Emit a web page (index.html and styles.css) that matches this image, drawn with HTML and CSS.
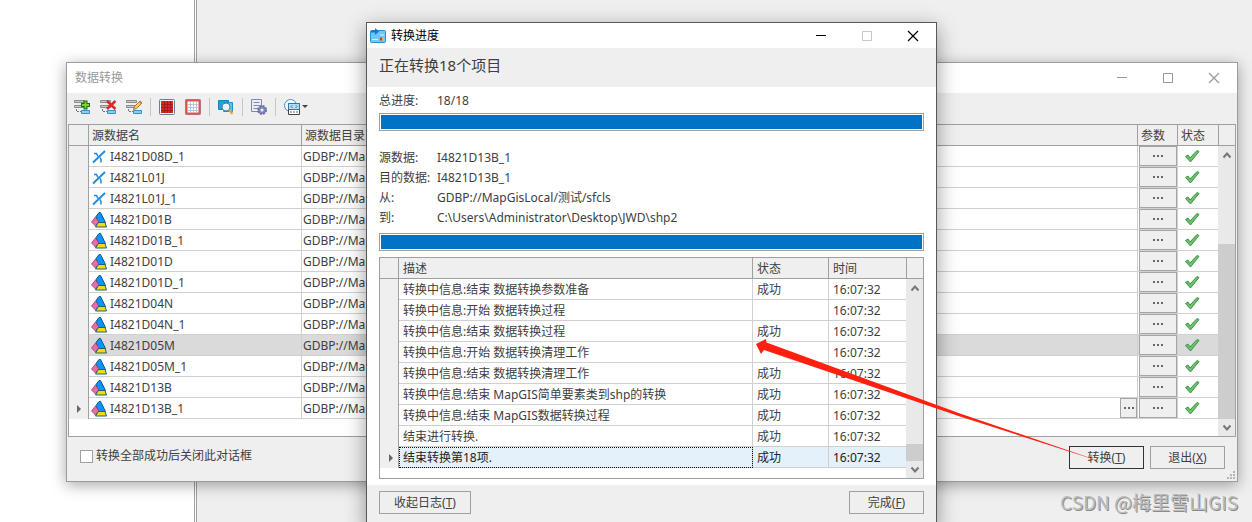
FILE: index.html
```html
<!DOCTYPE html>
<html lang="zh-CN">
<head>
<meta charset="utf-8">
<title>数据转换</title>
<link rel="stylesheet" href="styles.css">
</head>
<body>
<svg class="defs" aria-hidden="true">
  <symbol id="line" viewBox="0 0 16 16"><path d="M14 2 2 13.500" fill="none" stroke="#1b8ae0" stroke-width="1.800"/><path d="M3 4.500h2.500L7 7.500M9 8.500l1 2v3" fill="none" stroke="#1b8ae0" stroke-width="1.500"/></symbol>
  <symbol id="poly" viewBox="0 0 16 16"><path d="M8 .500h1.500L14.500 10.500H7.500L5 4.500Z" fill="#0a94fb" stroke="#12568c"/><path d="M4.500 5 7.500 9.500 4.500 14 .500 10Z" fill="#ee6aa6" stroke="#8a4675" stroke-width=".8"/><path d="M7.500 10.500h6.500l1.500 4.500H4.500Z" fill="#f8d90f" stroke="#1d6377"/></symbol>
  <symbol id="tick" viewBox="0 0 16 14"><path d="M1.500 7.500 4 6l2 3L13 1.500l2 1L6.500 13Z" fill="#6cc26a" stroke="#3d9347" stroke-linejoin="round"/></symbol>
  <symbol id="dots" viewBox="0 0 10 2"><path d="M0 0h2v2H0ZM4 0h2v2H4ZM8 0h2v2H8Z" fill="#666"/></symbol>
  <symbol id="up" viewBox="0 0 10 8"><path d="M1.500 6.500 5 2.500l3.500 4" fill="none" stroke="#777" stroke-width="2"/></symbol>
  <symbol id="down" viewBox="0 0 10 8"><path d="M1.500 1.500 5 5.500l3.500-4" fill="none" stroke="#777" stroke-width="2"/></symbol>
  <symbol id="min" viewBox="0 0 12 12"><path d="M1 5.500h10" stroke="currentColor"/></symbol>
  <symbol id="max" viewBox="0 0 12 12"><path d="M1.500 1.500h9v9h-9Z" fill="none" stroke="currentColor"/></symbol>
  <symbol id="close" viewBox="0 0 12 12"><path d="m1 1 10 10M11 1 1 11" stroke="currentColor" stroke-width="1.200"/></symbol>
  <symbol id="list" viewBox="0 0 16 16"><path d="M.500 1.500h10v2h-10ZM.500 6.500h10v2h-10Z" fill="#c8c8c8" stroke="#8b8b8b"/><path d="M2.500 10v2.500H7" fill="none" stroke="#777" stroke-dasharray="2 1"/><path d="M7.500 11.500h8v3h-8Z" fill="#7fd0fb" stroke="#3b8fcf"/></symbol>
</svg>
<main class="desktop">
  <div class="side-pane"></div>

  <section class="window back-window" aria-label="数据转换">
    <header class="titlebar back-title">
      <h1 class="title">数据转换</h1>
      <div class="controls">
        <button class="control" aria-label="最小化"><svg><use href="#min"/></svg></button>
        <button class="control" aria-label="最大化"><svg><use href="#max"/></svg></button>
        <button class="control" aria-label="关闭"><svg><use href="#close"/></svg></button>
      </div>
    </header>
    <div class="toolbar">
      <div class="tool-group">
        <button class="tool" aria-label="添加"><svg viewBox="0 0 16 16"><use href="#list"/><path d="M11.500 1.500v9M7 6h9" stroke="#1f6b12" stroke-width="4"/><path d="M11.500 2.500v7M8 6h7" stroke="#7ed03a" stroke-width="1.800"/></svg></button>
        <button class="tool" aria-label="删除"><svg viewBox="0 0 16 16"><use href="#list"/><path d="m7 2 8.500 8M15.500 2 7 10" stroke="#d9292c" stroke-width="2.600"/></svg></button>
        <button class="tool" aria-label="编辑"><svg viewBox="0 0 16 16"><use href="#list"/><path d="m7.500 10.500 1-3L14 2l2 2-5.500 5.500Z" fill="#f3cf62" stroke="#866022" stroke-width=".8"/><path d="m13 3 1.500-1.500 1.500 2L15 5Z" fill="#e06c6c"/></svg></button>
      </div>
      <span class="separator"></span>
      <div class="tool-group">
        <button class="tool" aria-label="全选"><svg viewBox="0 0 16 16"><rect x=".5" y=".5" width="15" height="15" rx="1" fill="#f6f3f3" stroke="#6b7f96"/><path d="M2 2h12v12H2Z" fill="#d9252b"/><path d="M5.500 2v12M8.500 2v12M11.500 2v12M2 5.500h12M2 8.500h12M2 11.500h12" stroke="#a5181e"/></svg></button>
        <button class="tool" aria-label="反选"><svg viewBox="0 0 16 16"><rect x=".5" y=".5" width="15" height="15" rx="1" fill="#fff" stroke="#8296ad"/><rect x="1.500" y="1.500" width="13" height="13" fill="#fff" stroke="#ec4c4c" stroke-width="2"/><path d="M5.500 3v10M8.500 3v10M11.500 3v10M3 5.500h10M3 8.500h10M3 11.500h10" stroke="#b3c6da"/></svg></button>
      </div>
      <span class="separator"></span>
      <button class="tool" aria-label="查找"><svg viewBox="0 0 16 16"><path d="M.500 1.500h10v9h-10Z" fill="#1ba5dd" stroke="#1382bd"/><path d="M5.500 3.500h9v9h-9Z" fill="#55c4ee" stroke="#2192c9"/><circle cx="8" cy="8" r="4" fill="#e6f4fb" stroke="#557d99"/><path d="m11 11 3.500 4" stroke="#eca13a" stroke-width="2.200"/></svg></button>
      <span class="separator"></span>
      <button class="tool" aria-label="参数设置"><svg viewBox="0 0 16 16"><path d="M.500.500h10v12h-10Z" fill="#eceefa" stroke="#7e86b8"/><path d="M2.500 3.500h6M2.500 6.500h6M2.500 9.500h4" stroke="#7e86b8"/><circle cx="11" cy="11" r="4" fill="#8189bc" stroke="#6970a5" stroke-width="2" stroke-dasharray="2 1.140"/><circle cx="11" cy="11" r="1.500" fill="#eceefa"/></svg></button>
      <span class="separator"></span>
      <button class="tool tool-menu" aria-label="更多"><svg viewBox="0 0 16 16"><circle cx="6.500" cy="6.500" r="6" fill="#f4faff" stroke="#4b8fd0"/><path d="M4.500 4.500h11v11h-11Z" fill="#fff" stroke="#444"/><path d="M4.500 4.500h11v6h-11Z" fill="#b5defc" stroke="#2a78bd"/><path d="m8.500 6-1.500 1.500L8.500 9m3-3 1.500 1.500L11.500 9" fill="none" stroke="#1a66ab" stroke-width=".8"/><path d="M6 13h9" stroke="#999" stroke-width="1.500" stroke-dasharray="2 1"/></svg><span class="caret"></span></button>
    </div>

    <div class="grid back-grid">
      <table class="table">
        <colgroup><col class="c-mark"><col class="c-name"><col><col class="c-param"><col class="c-state"></colgroup>
        <thead><tr><th></th><th>源数据名</th><th>源数据目录</th><th>参数</th><th class="last">状态</th></tr></thead>
        <tbody>
          <tr><th></th><td><span class="name"><svg><use href="#line"/></svg>I4821D08D_1</span></td><td class="dir">GDBP://MapGisLocal</td><td class="param"><button class="more" aria-label="参数"><svg><use href="#dots"/></svg></button></td><td class="state"><svg><use href="#tick"/></svg></td></tr>
          <tr><th></th><td><span class="name"><svg><use href="#line"/></svg>I4821L01J</span></td><td class="dir">GDBP://MapGisLocal</td><td class="param"><button class="more" aria-label="参数"><svg><use href="#dots"/></svg></button></td><td class="state"><svg><use href="#tick"/></svg></td></tr>
          <tr><th></th><td><span class="name"><svg><use href="#line"/></svg>I4821L01J_1</span></td><td class="dir">GDBP://MapGisLocal</td><td class="param"><button class="more" aria-label="参数"><svg><use href="#dots"/></svg></button></td><td class="state"><svg><use href="#tick"/></svg></td></tr>
          <tr><th></th><td><span class="name"><svg><use href="#poly"/></svg>I4821D01B</span></td><td class="dir">GDBP://MapGisLocal</td><td class="param"><button class="more" aria-label="参数"><svg><use href="#dots"/></svg></button></td><td class="state"><svg><use href="#tick"/></svg></td></tr>
          <tr><th></th><td><span class="name"><svg><use href="#poly"/></svg>I4821D01B_1</span></td><td class="dir">GDBP://MapGisLocal</td><td class="param"><button class="more" aria-label="参数"><svg><use href="#dots"/></svg></button></td><td class="state"><svg><use href="#tick"/></svg></td></tr>
          <tr><th></th><td><span class="name"><svg><use href="#poly"/></svg>I4821D01D</span></td><td class="dir">GDBP://MapGisLocal</td><td class="param"><button class="more" aria-label="参数"><svg><use href="#dots"/></svg></button></td><td class="state"><svg><use href="#tick"/></svg></td></tr>
          <tr><th></th><td><span class="name"><svg><use href="#poly"/></svg>I4821D01D_1</span></td><td class="dir">GDBP://MapGisLocal</td><td class="param"><button class="more" aria-label="参数"><svg><use href="#dots"/></svg></button></td><td class="state"><svg><use href="#tick"/></svg></td></tr>
          <tr><th></th><td><span class="name"><svg><use href="#poly"/></svg>I4821D04N</span></td><td class="dir">GDBP://MapGisLocal</td><td class="param"><button class="more" aria-label="参数"><svg><use href="#dots"/></svg></button></td><td class="state"><svg><use href="#tick"/></svg></td></tr>
          <tr><th></th><td><span class="name"><svg><use href="#poly"/></svg>I4821D04N_1</span></td><td class="dir">GDBP://MapGisLocal</td><td class="param"><button class="more" aria-label="参数"><svg><use href="#dots"/></svg></button></td><td class="state"><svg><use href="#tick"/></svg></td></tr>
          <tr class="hot"><th></th><td><span class="name"><svg><use href="#poly"/></svg>I4821D05M</span></td><td class="dir">GDBP://MapGisLocal</td><td class="param"><button class="more" aria-label="参数"><svg><use href="#dots"/></svg></button></td><td class="state"><svg><use href="#tick"/></svg></td></tr>
          <tr><th></th><td><span class="name"><svg><use href="#poly"/></svg>I4821D05M_1</span></td><td class="dir">GDBP://MapGisLocal</td><td class="param"><button class="more" aria-label="参数"><svg><use href="#dots"/></svg></button></td><td class="state"><svg><use href="#tick"/></svg></td></tr>
          <tr><th></th><td><span class="name"><svg><use href="#poly"/></svg>I4821D13B</span></td><td class="dir">GDBP://MapGisLocal</td><td class="param"><button class="more" aria-label="参数"><svg><use href="#dots"/></svg></button></td><td class="state"><svg><use href="#tick"/></svg></td></tr>
          <tr><th><span class="pointer"></span></th><td><span class="name"><svg><use href="#poly"/></svg>I4821D13B_1</span></td><td class="dir"><div class="dir-edit"><span class="dir-text">GDBP://MapGisLocal</span><button class="more more-small" aria-label="浏览"><svg><use href="#dots"/></svg></button></div></td><td class="param"><button class="more" aria-label="参数"><svg><use href="#dots"/></svg></button></td><td class="state"><svg><use href="#tick"/></svg></td></tr>
        </tbody>
      </table>
      <div class="rail">
        <div class="rail-head"></div>
        <div class="rail-button"><svg><use href="#up"/></svg></div>
        <div class="rail-track"></div>
        <div class="rail-thumb"></div>
        <div class="rail-button"><svg><use href="#down"/></svg></div>
      </div>
    </div>

    <footer class="back-footer">
      <label class="check"><input type="checkbox">转换全部成功后关闭此对话框</label>
      <div class="actions">
        <button class="button default">转换(<u>T</u>)</button>
        <button class="button">退出(<u>X</u>)</button>
      </div>
    </footer>
    <svg class="grip" viewBox="0 0 9 9"><path d="M6 0h2v2H6ZM3 3h2v2H3ZM6 3h2v2H6ZM0 6h2v2H0ZM3 6h2v2H3ZM6 6h2v2H6Z" fill="#b5b5b5"/></svg>
  </section>

  <section class="window front-window" role="dialog" aria-label="转换进度">
    <header class="titlebar front-title">
      <svg class="app-icon" viewBox="0 0 16 16"><rect x=".5" y="2.500" width="15" height="12" rx="1" fill="#6cc7fa" stroke="#2c8fd2"/><path d="M1 2.500h4V0l4 3.500L5 7V4.500H1Z" fill="#1579c8"/><path d="M2 11.500h6M10 7h4" stroke="#d7f1ff"/><path d="M10 9.500h2v3h-2Z" fill="#d9302a"/><path d="M12 9.500h2v3h-2Z" fill="#f3b52c"/></svg>
      <h2 class="title">转换进度</h2>
      <div class="controls">
        <button class="control" aria-label="最小化"><svg><use href="#min"/></svg></button>
        <button class="control" aria-label="最大化" disabled><svg><use href="#max"/></svg></button>
        <button class="control" aria-label="关闭"><svg><use href="#close"/></svg></button>
      </div>
    </header>
    <p class="banner">正在转换18个项目</p>
    <div class="progress-body">
      <dl class="facts total"><dt>总进度:</dt><dd>18/18</dd></dl>
      <div class="bar" role="progressbar" aria-label="总进度" aria-valuenow="100"><div class="fill"></div></div>
      <dl class="facts detail">
        <dt>源数据:</dt><dd>I4821D13B_1</dd>
        <dt>目的数据:</dt><dd>I4821D13B_1</dd>
        <dt>从:</dt><dd>GDBP://MapGisLocal/测试/sfcls</dd>
        <dt>到:</dt><dd>C:\Users\Administrator\Desktop\JWD\shp2</dd>
      </dl>
      <div class="bar" role="progressbar" aria-label="当前进度" aria-valuenow="100"><div class="fill"></div></div>
      <div class="grid log-grid">
        <table class="table">
          <colgroup><col class="l-mark"><col><col class="l-state"><col class="l-time"></colgroup>
          <thead><tr><th></th><th>描述</th><th>状态</th><th class="last">时间</th></tr></thead>
          <tbody>
            <tr><th></th><td>转换中信息:结束 数据转换参数准备</td><td>成功</td><td class="last">16:07:32</td></tr>
            <tr><th></th><td>转换中信息:开始 数据转换过程</td><td></td><td class="last">16:07:32</td></tr>
            <tr><th></th><td>转换中信息:结束 数据转换过程</td><td>成功</td><td class="last">16:07:32</td></tr>
            <tr><th></th><td>转换中信息:开始 数据转换清理工作</td><td></td><td class="last">16:07:32</td></tr>
            <tr><th></th><td>转换中信息:结束 数据转换清理工作</td><td>成功</td><td class="last">16:07:32</td></tr>
            <tr><th></th><td>转换中信息:结束 MapGIS简单要素类到shp的转换</td><td>成功</td><td class="last">16:07:32</td></tr>
            <tr><th></th><td>转换中信息:结束 MapGIS数据转换过程</td><td>成功</td><td class="last">16:07:32</td></tr>
            <tr><th></th><td>结束进行转换.</td><td>成功</td><td class="last">16:07:32</td></tr>
            <tr class="current"><th><span class="pointer"></span></th><td class="focus">结束转换第18项.</td><td>成功</td><td class="last">16:07:32</td></tr>
          </tbody>
        </table>
        <div class="rail">
          <div class="rail-head"></div>
          <div class="rail-button"><svg><use href="#up"/></svg></div>
          <div class="rail-track"></div>
          <div class="rail-thumb"></div>
          <div class="rail-button"><svg><use href="#down"/></svg></div>
        </div>
      </div>
    </div>
    <footer class="front-footer">
      <button class="button wide">收起日志(<u>T</u>)</button>
      <button class="button">完成(<u>F</u>)</button>
    </footer>
  </section>

  <svg class="arrow" viewBox="0 0 1252 522" aria-hidden="true"><path d="M756 344 766 339 766.500 342.500 960 413.500 1105 463 960 416.500 764 350 761 354Z" fill="#ff2010"/></svg>
  <p class="watermark">CSDN @梅里雪山GIS</p>
</main>
</body>
</html>
```

FILE: styles.css
```css
* { box-sizing: border-box; }

body {
  margin: 0;
  font: 12px/20px "Noto Sans", "Noto Sans CJK SC", sans-serif;
  color: #404040;
}

h1, h2, p, dl, dd { margin: 0; }
svg { display: block; flex: none; }
button { font: inherit; color: inherit; padding: 0; }
.defs { position: absolute; width: 0; height: 0; }

.desktop {
  position: relative;
  display: flex;
  height: 100vh;
  overflow: hidden;
  background: #efefef;
}

.side-pane {
  width: 197px;
  border-right: 3px double #a0a0a0;
  background: #fff;
}

/* Windows */
.window { position: absolute; background: #efefef; }

.back-window {
  top: 62px;
  left: 66px;
  right: 14px;
  border: 1px solid #9c9c9c;
  box-shadow: 0 3px 14px rgba(0, 0, 0, .35);
}

.front-window {
  top: 22px;
  left: 366px;
  right: 315px;
  border: 1px solid #585858;
  box-shadow: 0 6px 20px rgba(0, 0, 0, .4);
}

.titlebar { display: flex; align-items: center; background: #fff; }
.back-title { height: 30px; padding-left: 8px; color: #999; }
.front-title { height: 25px; padding-left: 3px; gap: 5px; color: #000; }
.title { flex: 1; font-size: 12px; font-weight: 400; }
.app-icon { width: 16px; height: 16px; }
.controls { display: flex; align-self: stretch; }
.control {
  display: flex;
  align-items: center;
  justify-content: center;
  width: 46px;
  border: 0;
  background: none;
}
.control:disabled { color: #c8c8c8; }
.control svg { width: 12px; height: 12px; }

/* Toolbar */
.toolbar {
  display: flex;
  align-items: center;
  gap: 8px;
  height: 31px;
  padding: 0 7px 4px;
}
.tool-group { display: flex; gap: 10px; }
.tool { display: flex; align-items: center; border: 0; background: none; }
.tool svg { width: 16px; height: 16px; }
.tool-menu { gap: 2px; }
.separator { width: 1px; height: 18px; background: #c6c6c6; }
.caret { border: 3px solid transparent; border-top-color: #444; border-bottom: 0; }

/* Grids */
.grid { display: flex; border: 1px solid #a0a0a0; background: #fff; }
.back-grid { margin: 0 1px; }
.table {
  flex: 1;
  align-self: flex-start;
  width: 100%;
  min-width: 0;
  table-layout: fixed;
  border-collapse: separate;
  border-spacing: 0;
}
.back-grid .table { margin-bottom: 17px; }
.log-grid .table { margin-bottom: 10px; }
.table th, .table td {
  height: 21px;
  padding: 2px 4px 0;
  overflow: hidden;
  line-height: 18px;
  text-align: left;
  font-weight: 400;
  white-space: nowrap;
  vertical-align: middle;
}
.back-grid .table th { padding-left: 3px; }
.table th { border-right: 1px solid #a0a0a0; background: #efefef; }
.table thead th { border-bottom: 1px solid #a0a0a0; }
.table tbody th { padding-top: 0; }
.table td { border-right: 1px solid #d0d0d0; border-bottom: 1px solid #d0d0d0; }
.table .last, .table td.state { border-right: 0; }
.table td.dir { padding: 2px 0 0 1px; }
.table td.param { padding: 0 0 0 1px; }
.table td.state { padding: 0 0 0 6px; }
.c-mark { width: 20px; }
.c-name { width: 213px; }
.c-param, .c-state { width: 40px; }
.l-mark { width: 19px; }
.l-state { width: 76px; }
.l-time { width: 77px; }
.name { display: flex; align-items: center; gap: 3px; }
.name svg { width: 16px; height: 16px; margin-left: -2px; }
.state svg { width: 16px; height: 14px; }
.hot td { background: #dadada; }
.current td { background: #e4f1fa; color: #222; }
.table td.focus { outline: 1px dotted #111; outline-offset: -1px; }
.pointer {
  display: block;
  width: 4px;
  margin-left: 5px;
  border: 4px solid transparent;
  border-left-color: #666;
  border-right: 0;
}
.table td.dir:has(.dir-edit) { padding-top: 0; }
.dir-edit { display: flex; justify-content: space-between; }
.dir-text { padding-top: 2px; }
.more {
  display: flex;
  align-items: center;
  justify-content: center;
  width: 38px;
  height: 20px;
  border: 1px solid #a5a5a5;
  background: #efefef;
}
.more svg { width: 10px; height: 2px; }
.more-small { width: 17px; }

.rail { display: flex; flex-direction: column; width: 17px; background: #e9e9e9; }
.rail-head {
  height: 21px;
  border-left: 1px solid #a0a0a0;
  border-bottom: 1px solid #a0a0a0;
  background: #efefef;
}
.rail-button { display: flex; align-items: center; justify-content: center; height: 17px; }
.rail-button svg { width: 10px; height: 8px; }
.rail-track { flex: 1; }
.rail-thumb { background: #cdcdcd; }
.back-grid .rail-thumb { height: 175px; }
.log-grid .rail-thumb { height: 17px; }

/* Back window footer */
.back-footer {
  display: flex;
  align-items: flex-start;
  justify-content: space-between;
  padding: 9px 12px 12px 13px;
}
.check { display: flex; align-items: center; gap: 3px; }
.check input {
  appearance: none;
  width: 13px;
  height: 13px;
  margin: 0;
  border: 1px solid #a0a0a0;
  background: #fff;
}
.actions { display: flex; gap: 6px; }
.button {
  width: 75px;
  height: 23px;
  padding-top: 1px;
  border: 1px solid #a0a0a0;
  background: #efefef;
  line-height: 20px;
}
.button.default { border-color: #333; }
.button.wide { width: 92px; }
.grip { position: absolute; right: 1px; bottom: 1px; width: 9px; height: 9px; }

/* Progress window */
.banner { padding: 5px 12px 10px; font-size: 15px; line-height: 24px; }
.progress-body { padding: 4px 12px 6px; background: #fff; }
.facts { display: grid; grid-template-columns: 58px 1fr; }
.total { margin-bottom: 2px; }
.detail { margin: 17px 0 5px; }
.facts dt { white-space: nowrap; }
.bar { height: 18px; padding: 1px; border: 1px solid #a0a0a0; }
.fill { height: 100%; background: #0173c7; }
.log-grid { margin-top: 6px; }
.front-footer {
  display: flex;
  justify-content: space-between;
  padding: 6px 12px 12px;
}

.arrow { position: absolute; top: 0; left: 0; width: 1252px; height: 522px; pointer-events: none; }
.watermark {
  position: absolute;
  right: 14px;
  bottom: 7px;
  font: 19px/26px "Noto Sans CJK SC", sans-serif;
  color: #bdbdbd;
  text-shadow: 1px 1px 0 #8a8a8a;
}
```
